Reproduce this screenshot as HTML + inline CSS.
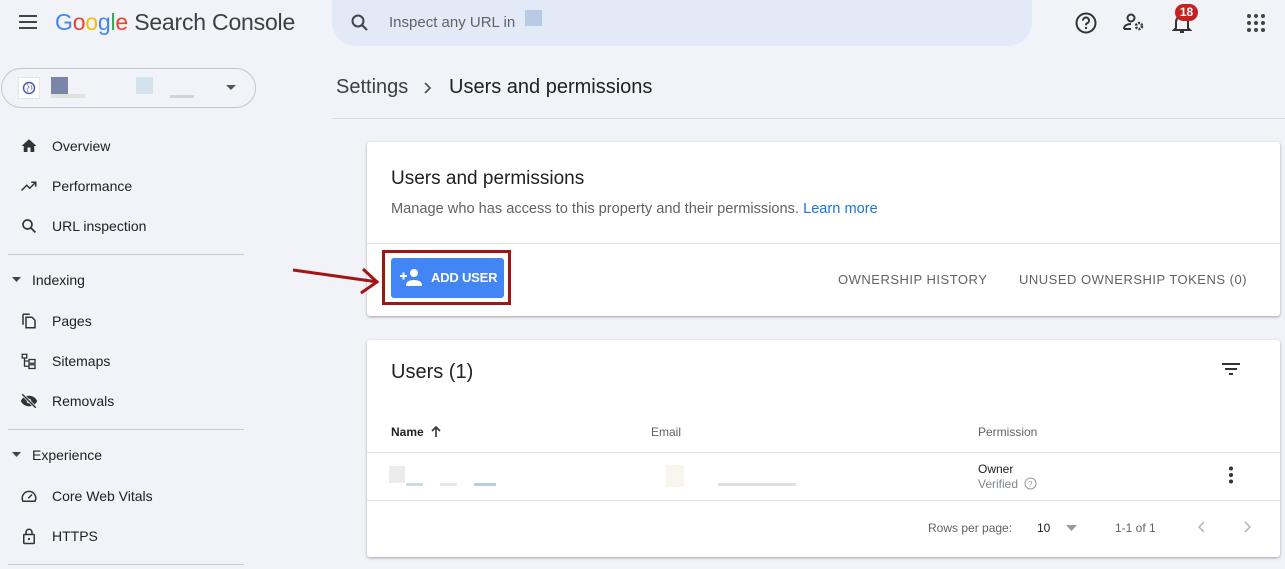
<!DOCTYPE html>
<html><head><meta charset="utf-8"><style>
*{box-sizing:border-box;margin:0;padding:0}
body{width:1285px;height:569px;overflow:hidden;background:#f1f3f8;font-family:"Liberation Sans",Arial,sans-serif;color:#202124;position:relative}
.a{position:absolute}
.nav{position:absolute;left:20px;font-size:14px;color:#202124;display:flex;align-items:center}
.nav svg{width:18px;height:18px;margin-right:14px}
.hr{position:absolute;left:8px;width:236px;height:1px;background:#c8cbd0}
.sec{position:absolute;left:12px;font-size:14px;display:flex;align-items:center}
.card{position:absolute;background:#fff;border-radius:3px;box-shadow:0 1px 2px rgba(0,0,0,.25),0 1px 4px rgba(0,0,0,.1)}
.th{position:absolute;font-size:12px;font-weight:bold;color:#3c4043}
.blur{position:absolute}
</style></head><body>
<svg class="a" style="left:18px;top:14px" width="20" height="16"><path d="M1 2h18M1 8h18M1 14h18" stroke="#444" stroke-width="2"/></svg>
<div class="a" style="left:55px;top:9px;font-size:23px;letter-spacing:-.2px"><span style="color:#4285f4">G</span><span style="color:#ea4335">o</span><span style="color:#fbbc05">o</span><span style="color:#4285f4">g</span><span style="color:#34a853">l</span><span style="color:#ea4335">e</span><span style="color:#3c4043"> Search Console</span></div>
<div class="a" style="left:332px;top:0;width:700px;height:46px;background:#e3eaf7;border-radius:0 0 24px 24px"></div>
<svg class="a" style="left:350px;top:13px" width="20" height="20"><circle cx="8" cy="8" r="5.5" fill="none" stroke="#444" stroke-width="2"/><path d="M12 12l5 5" stroke="#444" stroke-width="2.2"/></svg>
<div class="a" style="left:389px;top:14px;font-size:15px;color:#5f6368">Inspect any URL in</div>
<div class="a" style="left:525px;top:10px;width:17px;height:16px;background:#b8cbe6"></div>
<svg class="a" style="left:1074px;top:11px" width="24" height="24"><circle cx="12" cy="12" r="9.5" fill="none" stroke="#333" stroke-width="2"/><path d="M9 9.5a3 3 0 1 1 4 2.8c-1 .4-1 1-1 2" fill="none" stroke="#333" stroke-width="2"/><circle cx="12" cy="17" r="1.2" fill="#333"/></svg>
<svg class="a" style="left:1122px;top:12px" width="24" height="20"><circle cx="9" cy="6" r="3.5" fill="none" stroke="#333" stroke-width="2"/><path d="M2 17c0-4 4-5 7-5" fill="none" stroke="#333" stroke-width="2"/><path d="M2 17h7" stroke="#333" stroke-width="2"/><circle cx="17" cy="14" r="3" fill="none" stroke="#333" stroke-width="2.5" stroke-dasharray="2 1.2"/></svg>
<svg class="a" style="left:1172px;top:12px" width="20" height="22"><path d="M4 16V10a6 6 0 0 1 12 0v6l2 2H2z" fill="none" stroke="#333" stroke-width="2"/><path d="M8 20h4" stroke="#333" stroke-width="2"/></svg>
<div class="a" style="left:1175px;top:4px;width:23px;height:17px;border-radius:9px;background:#c5221f;color:#fff;font-size:12px;font-weight:bold;text-align:center;line-height:17px">18</div>
<svg class="a" style="left:1247px;top:14px" width="18" height="18"><g fill="#444"><circle cx="2" cy="2" r="2"/><circle cx="9" cy="2" r="2"/><circle cx="16" cy="2" r="2"/><circle cx="2" cy="9" r="2"/><circle cx="9" cy="9" r="2"/><circle cx="16" cy="9" r="2"/><circle cx="2" cy="16" r="2"/><circle cx="9" cy="16" r="2"/><circle cx="16" cy="16" r="2"/></g></svg>
<div class="a" style="left:1px;top:68px;width:255px;height:40px;border:1px solid #c4c7cc;border-radius:20px"></div>
<div class="a" style="left:18px;top:77px;width:22px;height:22px;background:#fff;border:1px solid #e6e6e6"></div>
<svg class="a" style="left:22px;top:81px" width="14" height="14"><circle cx="7" cy="7" r="5.5" fill="none" stroke="#4a5aa8" stroke-width="1.5"/><path d="M5 3l2 3-2 2 1 3M9 4l1 3-1 2" fill="none" stroke="#8c96c8"/></svg>
<div class="a" style="left:51px;top:77px;width:17px;height:17px;background:#7986a8"></div>
<div class="a" style="left:51px;top:94px;width:34px;height:4px;background:#e0e0dc"></div>
<div class="a" style="left:136px;top:77px;width:17px;height:17px;background:#d3e2ec"></div>
<div class="a" style="left:170px;top:95px;width:24px;height:3px;background:#d0d4dc"></div>
<svg class="a" style="left:226px;top:85px" width="10" height="6"><path d="M0 0h10L5 5z" fill="#555"/></svg>
<div class="nav" style="top:137px"><svg viewBox="0 0 24 24"><path d="M10 20v-6h4v6h5v-8h3L12 3 2 12h3v8z" fill="#333"/></svg>Overview</div>
<div class="nav" style="top:177px"><svg viewBox="0 0 24 24"><path d="M2 18l7-7 4 4 8-8M15 7h6v6" fill="none" stroke="#333" stroke-width="2"/></svg>Performance</div>
<div class="nav" style="top:217px"><svg viewBox="0 0 24 24"><circle cx="10" cy="10" r="6" fill="none" stroke="#333" stroke-width="2.2"/><path d="M14.5 14.5l6 6" stroke="#333" stroke-width="2.4"/></svg>URL inspection</div>
<div class="hr" style="top:254px"></div>
<div class="sec" style="top:272px"><svg width="10" height="6" style="margin-right:10px"><path d="M0 0h9L4.5 5z" fill="#444"/></svg>Indexing</div>
<div class="nav" style="top:312px"><svg viewBox="0 0 24 24"><path d="M4 3h9M4 3v14M8 7h8l4 4v10H8z" fill="none" stroke="#333" stroke-width="2"/></svg>Pages</div>
<div class="nav" style="top:352px"><svg viewBox="0 0 24 24"><path d="M3 3h6v5H3zM12 10h8v5h-8zM12 17h8v5h-8zM6 8v11h6M6 12h6" fill="none" stroke="#333" stroke-width="1.8"/></svg>Sitemaps</div>
<div class="nav" style="top:392px"><svg viewBox="0 0 24 24"><path d="M1 12c3-6 8-7 11-7s8 1 11 7c-3 6-8 7-11 7S4 18 1 12z" fill="#333"/><circle cx="12" cy="12" r="3" fill="#f1f3f8"/><path d="M3 3l18 18" stroke="#f1f3f8" stroke-width="4"/><path d="M3 3l18 18" stroke="#333" stroke-width="2"/></svg>Removals</div>
<div class="hr" style="top:429px"></div>
<div class="sec" style="top:447px"><svg width="10" height="6" style="margin-right:10px"><path d="M0 0h9L4.5 5z" fill="#444"/></svg>Experience</div>
<div class="nav" style="top:487px"><svg viewBox="0 0 24 24"><path d="M4 19a9 9 0 1 1 16 0z" fill="none" stroke="#333" stroke-width="2"/><path d="M11 15l5-5" stroke="#333" stroke-width="2"/></svg>Core Web Vitals</div>
<div class="nav" style="top:527px"><svg viewBox="0 0 24 24"><rect x="5" y="10" width="14" height="12" rx="1" fill="none" stroke="#333" stroke-width="2"/><path d="M8 10V7a4 4 0 0 1 8 0v3" fill="none" stroke="#333" stroke-width="2"/><circle cx="12" cy="16" r="1.5" fill="#333"/></svg>HTTPS</div>
<div class="hr" style="top:564px"></div>
<div class="a" style="left:336px;top:76px;font-size:20px;color:#3c4043">Settings</div>
<svg class="a" style="left:423px;top:81px" width="10" height="14"><path d="M2 2l5 5-5 5" fill="none" stroke="#555" stroke-width="1.8"/></svg>
<div class="a" style="left:449px;top:76px;font-size:20px;color:#202124">Users and permissions</div>
<div class="a" style="left:332px;top:118px;width:953px;height:1px;background:#dadce0"></div>
<div class="card" style="left:367px;top:142px;width:913px;height:174px"></div>
<div class="a" style="left:391px;top:168px;font-size:19px;color:#202124">Users and permissions</div>
<div class="a" style="left:391px;top:201px;font-size:14.6px;color:#5f6368">Manage who has access to this property and their permissions. <span style="color:#1a73e8">Learn more</span></div>
<div class="a" style="left:367px;top:243px;width:913px;height:1px;background:#e0e0e0"></div>
<div class="a" style="left:382px;top:250px;width:129px;height:55px;border:3px solid #a31515"></div>
<div class="a" style="left:391px;top:258px;width:113px;height:40px;background:#4285f4;border-radius:3px"></div>
<svg class="a" style="left:399px;top:267px" width="26" height="20"><path d="M1 9h7M4.5 5.5v7" stroke="#fff" stroke-width="2"/><circle cx="15" cy="6" r="4" fill="#fff"/><path d="M7 18c0-4 5-5 8-5s8 1 8 5v1H7z" fill="#fff"/></svg>
<div class="a" style="left:431px;top:270px;font-size:13px;font-weight:bold;color:#fff;letter-spacing:-.2px">ADD USER</div>
<svg class="a" style="left:290px;top:260px" width="95" height="40"><path d="M3 10L88 22" stroke="#a31515" stroke-width="3"/><path d="M73 9l14 13-16 11" fill="none" stroke="#a31515" stroke-width="3"/></svg>
<div class="a" style="left:838px;top:272px;font-size:13px;color:#5f6368;letter-spacing:.5px">OWNERSHIP HISTORY</div>
<div class="a" style="left:1019px;top:272px;font-size:13px;color:#5f6368;letter-spacing:.5px">UNUSED OWNERSHIP TOKENS (0)</div>
<div class="card" style="left:367px;top:340px;width:913px;height:217px"></div>
<div class="a" style="left:391px;top:361px;font-size:20px;color:#202124">Users (1)</div>
<svg class="a" style="left:1221px;top:362px" width="20" height="14"><path d="M1 2h18M4 7h12M8 12h4" stroke="#333" stroke-width="2"/></svg>
<div class="th" style="left:391px;top:425px;color:#202124">Name</div>
<svg class="a" style="left:430px;top:425px" width="12" height="13"><path d="M6 12V2M2 6l4-4 4 4" fill="none" stroke="#333" stroke-width="1.6"/></svg>
<div class="th" style="left:651px;top:425px;font-weight:normal;color:#5f6368">Email</div>
<div class="th" style="left:978px;top:425px;font-weight:normal;color:#5f6368">Permission</div>
<div class="a" style="left:367px;top:452px;width:913px;height:1px;background:#e0e0e0"></div>
<div class="blur" style="left:389px;top:466px;width:16px;height:17px;background:#ececec"></div>
<div class="blur" style="left:406px;top:483px;width:17px;height:3px;background:#c9dce0"></div>
<div class="blur" style="left:440px;top:483px;width:17px;height:3px;background:#e6e8ea"></div>
<div class="blur" style="left:474px;top:483px;width:22px;height:3px;background:#b6cfdc"></div>
<div class="blur" style="left:666px;top:465px;width:18px;height:22px;background:#f8f6ef"></div>
<div class="blur" style="left:718px;top:483px;width:78px;height:3px;background:#e0e0e2"></div>
<div class="a" style="left:978px;top:462px;font-size:12px;color:#202124">Owner</div>
<div class="a" style="left:978px;top:477px;font-size:12px;color:#80868b">Verified</div>
<svg class="a" style="left:1024px;top:477px" width="13" height="13"><circle cx="6.5" cy="6.5" r="5.5" fill="none" stroke="#999"/><text x="4" y="10" font-size="8" fill="#999" font-family="Liberation Sans">?</text></svg>
<svg class="a" style="left:1228px;top:466px" width="6" height="18"><circle cx="3" cy="2.5" r="2" fill="#333"/><circle cx="3" cy="9" r="2" fill="#333"/><circle cx="3" cy="15.5" r="2" fill="#333"/></svg>
<div class="a" style="left:367px;top:500px;width:913px;height:1px;background:#e0e0e0"></div>
<div class="a" style="left:928px;top:521px;font-size:12px;color:#5f6368">Rows per page:</div>
<div class="a" style="left:1037px;top:521px;font-size:12px;color:#202124">10</div>
<svg class="a" style="left:1066px;top:525px" width="11" height="6"><path d="M0 0h11L5.5 6z" fill="#999"/></svg>
<div class="a" style="left:1115px;top:521px;font-size:12px;color:#5f6368">1-1 of 1</div>
<svg class="a" style="left:1197px;top:520px" width="10" height="14"><path d="M7 2L2 7l5 5" fill="none" stroke="#bbb" stroke-width="1.6"/></svg>
<svg class="a" style="left:1242px;top:520px" width="10" height="14"><path d="M3 2l5 5-5 5" fill="none" stroke="#bbb" stroke-width="1.6"/></svg>
</body></html>
